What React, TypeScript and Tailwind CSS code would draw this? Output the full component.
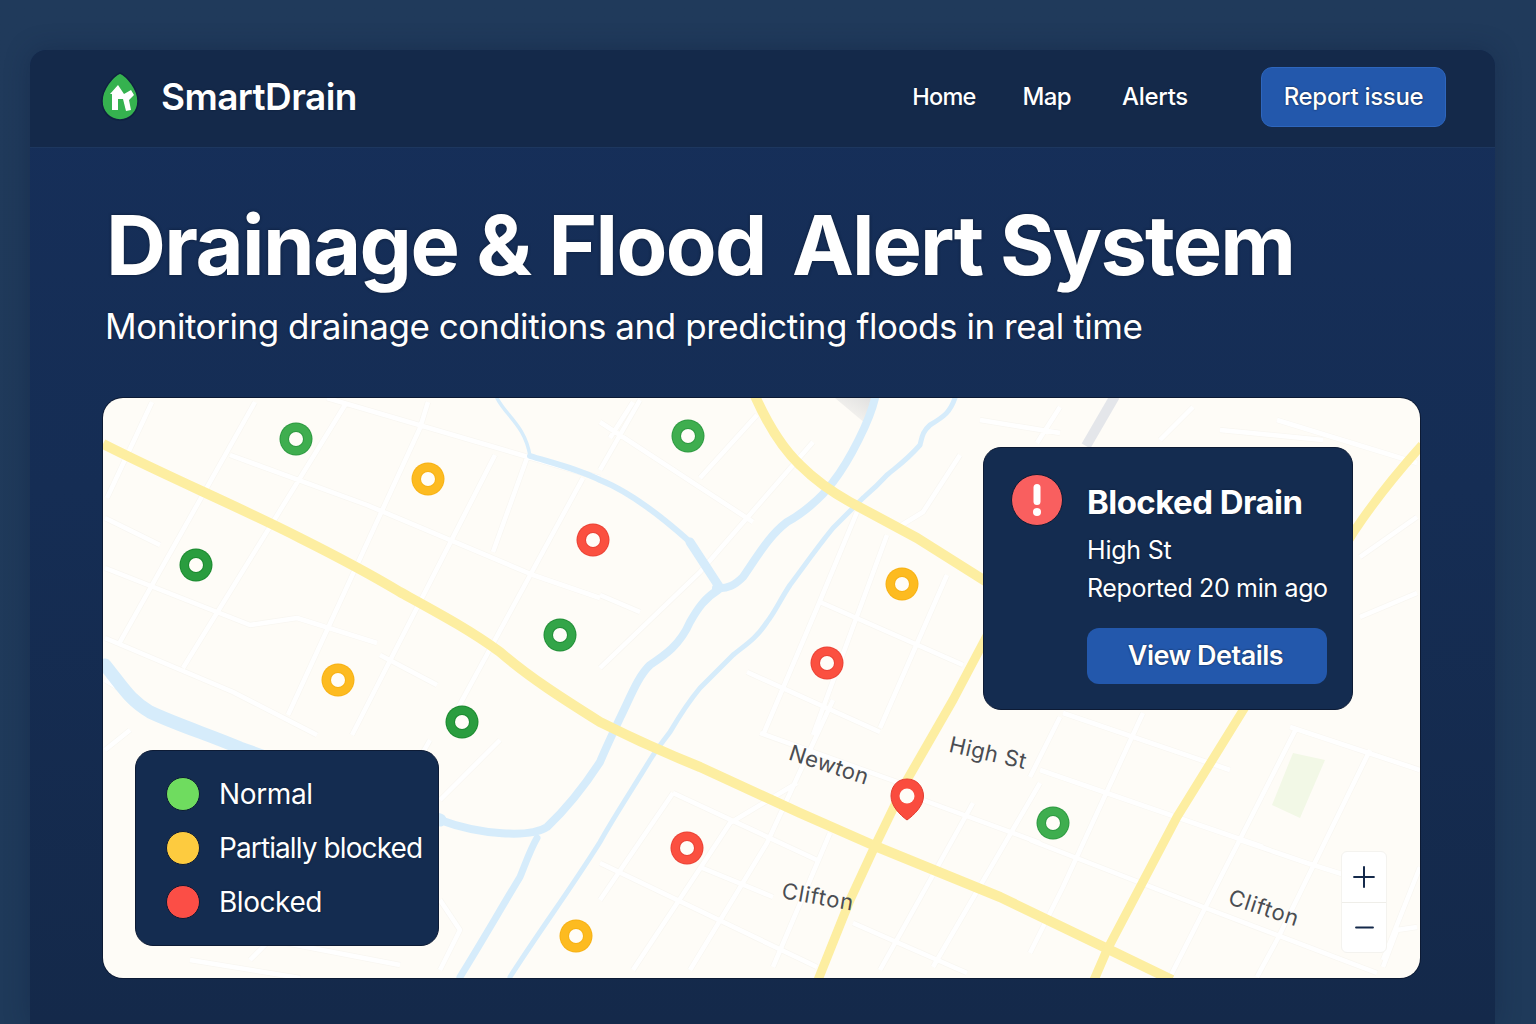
import { Plus, Minus } from "lucide-react";

const streets = [
  "M152 402L107 498","M255 402L120 642","M345 405L183 668","M428 402L420 428L288 715","M495 455L352 735","M527 458L493 552","M583 478L447 728",
  "M327 398L600 478","M230 455L367 505L533 575L600 598","M105 518L160 545","M105 568L250 625L297 618L377 643","M105 638L233 692L317 735","M380 655L437 685",
  "M600 422L753 522","M700 478L757 415","M610 438L633 402","M600 668L700 572L813 442","M600 595L640 612","M820 602L963 665","M747 672L880 732",
  "M763 735L817 608L857 512","M813 735L887 535","M880 728L947 575","M897 528L923 512L960 455",
  "M673 793L817 860","M673 793L600 900","M600 863L817 967","M633 970L730 823L797 783","M690 970L767 843L833 700","M773 967L830 833","M700 867L773 897","M853 923L967 973",
  "M880 970L973 803","M933 967L1040 783","M923 800L1040 843","M760 733L900 783",
  "M1040 770L1263 847","M1063 713L1230 770","M1290 727L1420 770","M1060 717L1030 777","M1143 713L1063 887L1030 953","M1297 727L1170 977","M1370 750L1277 940L1257 977",
  "M1240 840L1307 863L1383 887","M1420 867L1383 960","M1417 927L1397 930L1383 967","M1030 840L1203 907L1377 973",
  "M980 420L1060 433","M1060 407L1037 443","M1193 407L1160 440","M1277 420L1417 463","M1220 430L1323 440","M1417 517L1360 557","M1360 617L1417 593",
  "M430 740L390 810L330 900","M500 740L440 800","M250 960L270 940L400 965","M440 900L460 930L440 970","M640 400L600 470",
  "M190 960L300 978","M105 750L130 730","M105 680L130 695",
].join("");

const markers: [number, number, string, string][] = [
  [296, 439, "#3fae4f", "#2f9a42"], [688, 436, "#3fae4f", "#2f9a42"], [1053, 823, "#3fae4f", "#2f9a42"],
  [196, 565, "#2a9d3f", "#1c8a30"], [462, 722, "#2a9d3f", "#1c8a30"], [560, 635, "#33a548", "#238f38"],
  [428, 479, "#fdbb20", "#f7b216"], [338, 680, "#fdbb20", "#f7b216"], [576, 936, "#fdbb20", "#f7b216"], [902, 584, "#fdbb20", "#f7b216"],
  [593, 540, "#fb5040", "#ea4336"], [827, 663, "#fb5040", "#ea4336"], [687, 848, "#fb5040", "#ea4336"],
];

function MapDrawing() {
  return (
    <svg viewBox="103 398 1317 580" className="block w-full h-full">
      <defs>
        <linearGradient id="smudge" x1="1" y1="0" x2="0" y2="1">
          <stop offset="0" stopColor="#dedede" />
          <stop offset="1" stopColor="#fefcf7" />
        </linearGradient>
      </defs>
      <polygon points="1293,753 1325,760 1300,818 1272,805" fill="#f2f8e6" />
      <path d="M835 398H878L866 424Z" fill="url(#smudge)" />
      <path d={streets} fill="none" stroke="#f9f7f2" strokeWidth="6" strokeLinejoin="round" />
      <path d={streets} fill="none" stroke="#ffffff" strokeWidth="4.5" strokeLinejoin="round" />
      <path d="M1115 396L1086 446" fill="none" stroke="#e4e6ea" strokeWidth="10" />
      <g fill="none" stroke="#d6ecfb" strokeLinecap="round" strokeLinejoin="round">
        <path d="M497 398C505 415 525 425 530 456" strokeWidth="3.5" />
        <path d="M530 456C560 465 580 470 600 480C630 492 660 515 690 542" strokeWidth="6" />
        <path d="M690 542L707 568L720 588" strokeWidth="9" />
        <path d="M875 398C870 420 850 460 833 482C820 500 800 515 787 522C770 535 760 552 743 577C735 585 728 589 716 588" strokeWidth="8" />
        <path d="M718 590C705 598 698 608 690 622C680 645 665 655 650 665C638 676 630 698 620 718C612 735 605 750 600 762C585 785 565 810 547 827C530 838 480 835 440 820" strokeWidth="8" />
        <path d="M105 665C125 690 130 700 150 712C180 726 210 735 240 748L440 820" strokeWidth="13" />
        <path d="M537 838C530 850 525 865 520 877C500 910 480 945 460 977" strokeWidth="7" />
        <path d="M955 398C950 412 945 416 930 425C922 432 922 438 920 445C905 462 895 468 887 475C875 488 870 492 863 498L833 528C815 550 800 572 790 585C780 600 775 612 767 622C755 640 745 645 733 655C720 668 710 678 700 688C690 700 680 715 670 732C660 745 655 752 650 760C635 785 615 815 600 842C570 890 540 930 510 977" strokeWidth="5" />
      </g>
      <g fill="none" stroke="#fdeea1" strokeLinejoin="round" strokeLinecap="butt">
        <path d="M103 444C170 478 235 505 300 538C340 558 370 574 400 592C440 614 470 630 500 652C530 678 565 700 600 722C640 742 670 755 700 767L800 813L875 846L1000 897L1110 950L1172 980" strokeWidth="10" />
        <path d="M755 396C768 425 782 448 800 465C815 480 832 492 850 502L917 538L990 584" strokeWidth="10" />
        <path d="M1422 445C1395 475 1375 500 1355 530L1242 712L1177 817L1107 950L1094 980" strokeWidth="9" />
        <path d="M990 630L953 700L907 780L875 846L850 900L818 980" strokeWidth="9" />
      </g>
      {markers.map(([x, y, c, e]) => (
        <g key={`${x}-${y}`}>
          <circle cx={x} cy={y} r="16.5" fill={e} />
          <circle cx={x} cy={y} r="15.5" fill={c} />
          <circle cx={x} cy={y} r="8" fill={e} />
          <circle cx={x} cy={y} r="7" fill="#fffdf8" />
        </g>
      ))}
      <path d="M907 779C918 779 923.5 788 923.5 796C923.5 806 914 815 907 820C900 815 891 806 891 796C891 788 896 779 907 779Z" fill="#fa4c3e" stroke="#e23c30" strokeWidth="1" />
      <circle cx="907" cy="796" r="7.5" fill="#fffdf8" />
    </svg>
  );
}

function Logo() {
  return (
    <svg viewBox="100 74 40 52" className="w-10 h-[52px] shrink-0">
      <path d="M120 76C127 79 138 92 138 104C138 115 130 123 120 123C110 123 102 115 102 104C102 92 113 79 120 76Z" fill="#35b24f" stroke="#0f2140" strokeWidth="1.5" />
      <polygon points="118,88 110,97 112,97 112,113 118,113 118,102 123,102 126,114 131,113 129,103 134,98 131,93 124,97" fill="#ffffff" />
    </svg>
  );
}

export default function App() {
  return (
    <div className="h-[1024px] overflow-hidden bg-[linear-gradient(180deg,#203a5b,#1f3a5a)] pt-[50px] pl-[30px] pr-[41px] font-['Inter','Liberation_Sans',sans-serif] text-white">
      <div className="h-[974px] rounded-t-2xl bg-[linear-gradient(180deg,#162f5a_0%,#152d54_45%,#14294a_100%)] shadow-[0_0_24px_rgba(15,30,60,0.35)] overflow-hidden">
        <header className="h-[98px] pb-[4px] flex items-center justify-between pl-[70px] pr-[49px] bg-[#14294a] border-b border-[#1d375f]">
          <div className="flex items-center gap-[21px]">
            <Logo />
            <span className="text-[37px] font-semibold tracking-[-0.6px] [text-shadow:0_0_2px_#0a1a33]">SmartDrain</span>
          </div>
          <nav className="flex items-center">
            <a className="text-[23.5px] font-medium tracking-[-0.8px] mr-[47px] [text-shadow:0_0_2px_#0a1a33]">Home</a>
            <a className="text-[24px] font-medium tracking-[-0.6px] mr-[51px] [text-shadow:0_0_2px_#0a1a33]">Map</a>
            <a className="text-[24px] font-medium tracking-[-0.3px] mr-[73px] [text-shadow:0_0_2px_#0a1a33]">Alerts</a>
            <button className="w-[185px] h-[60px] rounded-[11px] bg-[#2358ac] border border-[#2e66bd] text-[24px] font-medium tracking-[-0.3px] [text-shadow:0_0_2px_#0a1a33]">Report issue</button>
          </nav>
        </header>
        <main className="pl-[73px] pr-[75px]">
          <h1 className="mt-[42px] ml-[3px] text-[83px] leading-[110px] font-bold tracking-[-1.6px] whitespace-nowrap [text-shadow:0_0_3px_#0a1a33]">Drainage &amp; Flood <span className="ml-[8px] tracking-[-1.9px]">Alert System</span></h1>
          <p className="mt-[1px] ml-[2px] text-[35px] leading-[50px] tracking-[-0.45px] whitespace-nowrap [text-shadow:0_0_2px_#0a1a33]">Monitoring drainage conditions and predicting floods in real time</p>
          <section className="relative mt-[47px] h-[580px] rounded-[20px] bg-[#fefcf7] overflow-hidden ring-1 ring-[#0c1a34]">
            <MapDrawing />
            <span className="absolute left-[726px] top-[367px] -translate-x-1/2 -translate-y-1/2 rotate-[18deg] text-[22px] tracking-[0.4px] text-[#4a4d52]">Newton</span>
            <span className="absolute left-[885px] top-[355px] -translate-x-1/2 -translate-y-1/2 rotate-[13deg] text-[22px] tracking-[0.4px] text-[#4a4d52]">High St</span>
            <span className="absolute left-[715px] top-[499px] -translate-x-1/2 -translate-y-1/2 rotate-[10deg] text-[22px] tracking-[0.8px] text-[#4a4d52]">Clifton</span>
            <span className="absolute left-[1161px] top-[510px] -translate-x-1/2 -translate-y-1/2 rotate-[18deg] text-[22px] tracking-[0.8px] text-[#4a4d52]">Clifton</span>

            <div className="absolute left-[32px] top-[352px] w-[304px] h-[196px] rounded-[18px] bg-[#142c50] border border-[#0d1b35] pl-[30px] pt-[26px] flex flex-col gap-[20px]">
              <div className="flex items-center gap-[19px] h-[34px]">
                <span className="w-[34px] h-[34px] rounded-full border border-[#0c1a34] shrink-0 bg-[#6fdc5f]" />
                <span className="text-[28px] tracking-[-0.35px] whitespace-nowrap [text-shadow:0_0_2px_#0a1a33]">Normal</span>
              </div>
              <div className="flex items-center gap-[19px] h-[34px]">
                <span className="w-[34px] h-[34px] rounded-full border border-[#0c1a34] shrink-0 bg-[#fdcb3f]" />
                <span className="text-[28px] tracking-[-0.9px] whitespace-nowrap [text-shadow:0_0_2px_#0a1a33]">Partially blocked</span>
              </div>
              <div className="flex items-center gap-[19px] h-[34px]">
                <span className="w-[34px] h-[34px] rounded-full border border-[#0c1a34] shrink-0 bg-[#fb4e46]" />
                <span className="text-[28px] tracking-[-0.45px] whitespace-nowrap [text-shadow:0_0_2px_#0a1a33]">Blocked</span>
              </div>
            </div>

            <div className="absolute left-[880px] top-[49px] w-[370px] h-[263px] rounded-[18px] bg-[#142c50] border border-[#0d1b35] pl-[27px] pt-[26px] flex gap-[24px]">
              <svg viewBox="0 0 52 52" className="w-[52px] h-[52px] shrink-0">
                <circle cx="26" cy="26" r="25.5" fill="#f95f5f" stroke="#0d1b35" strokeWidth="1" />
                <rect x="22.5" y="10" width="7" height="21" rx="3.5" fill="#fff" />
                <circle cx="26" cy="38" r="4" fill="#fff" />
              </svg>
              <div className="flex flex-col">
                <div className="mt-[2px] text-[33px] leading-[52px] font-bold tracking-[-0.55px] whitespace-nowrap [text-shadow:0_0_2px_#0a1a33]">Blocked Drain</div>
                <div className="mt-[3px] text-[25px] leading-[38px] tracking-[-0.2px] whitespace-nowrap [text-shadow:0_0_2px_#0a1a33]">High St</div>
                <div className="text-[25px] leading-[38px] tracking-[-0.35px] whitespace-nowrap [text-shadow:0_0_2px_#0a1a33]">Reported 20 min ago</div>
                <button className="mt-[21px] w-[240px] h-[56px] pr-[3px] rounded-[12px] bg-[#2358ac] text-[27px] font-semibold tracking-[-0.5px] [text-shadow:0_0_2px_#0a1a33]">View Details</button>
              </div>
            </div>

            <div className="absolute left-[1238px] top-[453px] w-[46px] h-[102px] rounded-[6px] bg-white flex flex-col border border-[#f4f3ef] text-[#14294a]">
              <div className="h-[51px] flex items-center justify-center border-b border-[#efeee9]"><Plus size={34} strokeWidth={1.4} /></div>
              <div className="flex-1 flex items-center justify-center"><Minus size={29} strokeWidth={1.6} /></div>
            </div>
          </section>
        </main>
      </div>
    </div>
  );
}
